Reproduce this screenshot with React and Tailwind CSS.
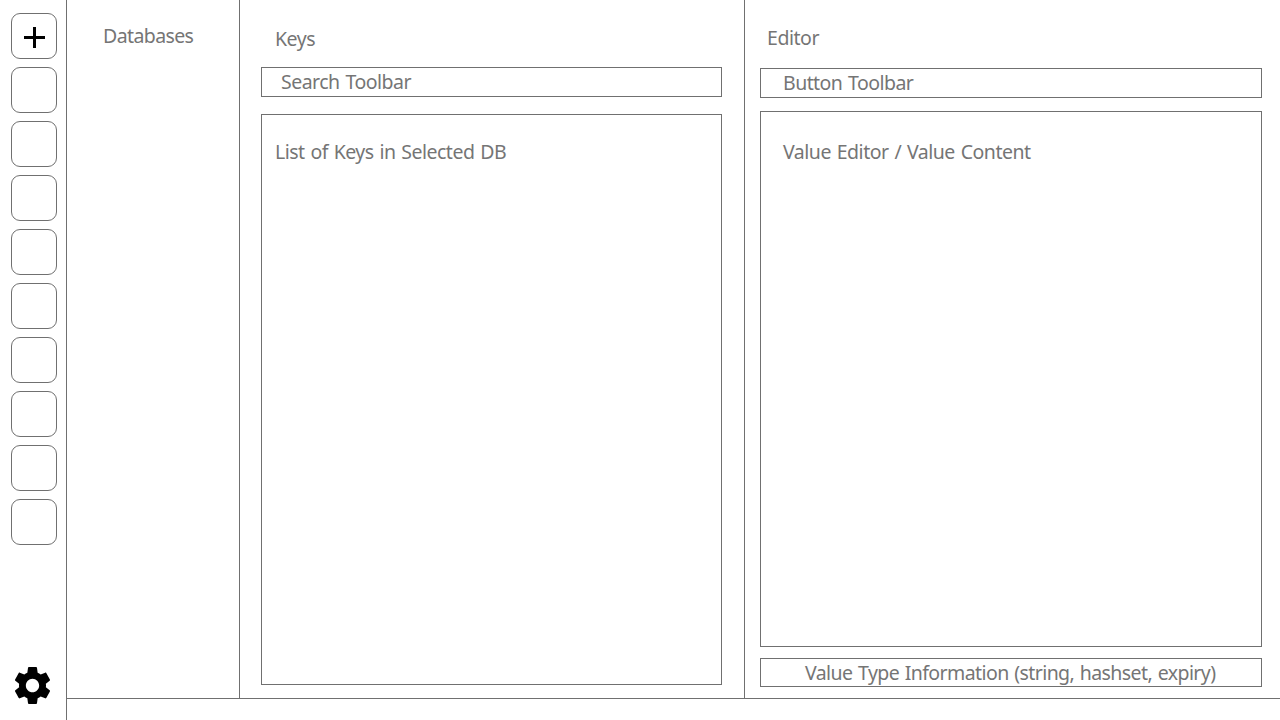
const SLOTS = 10;

function Label({ className, children }) {
  return (
    <div className={`h-[27px] w-max whitespace-nowrap text-[19.5px] leading-[27px] text-[#757575] [word-spacing:1.2px] ${className}`}>
      {children}
    </div>
  );
}

function PlusIcon() {
  return (
    <svg className="h-[21px] w-[21px]" viewBox="0 0 21 21" shapeRendering="crispEdges">
      <path d="M9 0h3v9h9v3h-9v9H9v-9H0V9h9z" fill="#000" />
    </svg>
  );
}

function GearIcon() {
  return (
    <svg className="h-[37px] w-[35px]" viewBox="2.27 2 19.46 20" preserveAspectRatio="none">
      <path
        fill="#000"
        d="M19.43 12.98c.04-.32.07-.64.07-.98s-.03-.66-.07-.98l2.11-1.65c.19-.15.24-.42.12-.64l-2-3.46c-.12-.22-.39-.3-.61-.22l-2.49 1c-.52-.4-1.08-.73-1.69-.98l-.38-2.65C14.46 2.18 14.25 2 14 2h-4c-.25 0-.46.18-.49.42l-.38 2.65c-.61.25-1.17.59-1.69.98l-2.49-1c-.23-.09-.49 0-.61.22l-2 3.46c-.13.22-.07.49.12.64l2.11 1.65c-.04.32-.07.65-.07.98s.03.66.07.98l-2.11 1.65c-.19.15-.24.42-.12.64l2 3.46c.12.22.39.3.61.22l2.49-1c.52.4 1.08.73 1.69.98l.38 2.65c.03.24.24.42.49.42h4c.25 0 .46-.18.49-.42l.38-2.65c.61-.25 1.17-.59 1.69-.98l2.49 1c.23.09.49 0 .61-.22l2-3.46c.12-.22.07-.49-.12-.64l-2.11-1.65zM12 15.7c-2 0-3.7-1.65-3.7-3.7s1.7-3.7 3.7-3.7 3.7 1.65 3.7 3.7-1.7 3.7-3.7 3.7z"
      />
    </svg>
  );
}

export default function App() {
  return (
    <div className="flex h-[720px] w-[1280px] overflow-hidden bg-white font-['Noto_Sans','Open_Sans',sans-serif]">
      <nav className="flex w-[67px] shrink-0 flex-col justify-between border-r border-[#707070] pt-[13px] pb-4 pl-[11px]">
        <div className="flex flex-col gap-2">
          {Array.from({ length: SLOTS }, (_, i) => (
            <div key={i} className="h-[46px] w-[46px] rounded-[9px] border border-[#707070] pt-[13px] pl-3">
              {i === 0 && <PlusIcon />}
            </div>
          ))}
        </div>
        <div className="pl-1">
          <GearIcon />
        </div>
      </nav>

      <div className="flex min-w-0 grow flex-col">
        <main className="flex h-[699px] border-b border-[#707070]">
          <section className="w-[173px] shrink-0 border-r border-[#707070] pt-[22px] pl-9">
            <Label className="tracking-[-0.6px]">Databases</Label>
          </section>

          <section className="flex w-[505px] shrink-0 flex-col border-r border-[#707070] pt-[25px] pr-[22px] pb-[13px] pl-[21px]">
            <Label className="ml-3.5 tracking-[-0.45px]">Keys</Label>
            <div className="mt-[15px] h-[30px] shrink-0 border border-[#707070] pl-[19px]">
              <Label className="tracking-[-0.51px]">Search Toolbar</Label>
            </div>
            <div className="mt-[17px] grow border border-[#707070] pt-[23px] pl-[13px]">
              <Label className="tracking-[-0.5px]">List of Keys in Selected DB</Label>
            </div>
          </section>

          <section className="flex grow flex-col pt-6 pr-[18px] pb-[11px] pl-[15px]">
            <Label className="ml-[7px] tracking-[-0.45px]">Editor</Label>
            <div className="mt-[17px] h-[30px] shrink-0 border border-[#707070] pl-[22px]">
              <Label className="tracking-[-0.55px]">Button Toolbar</Label>
            </div>
            <div className="mt-[13px] grow border border-[#707070] pt-[26px] pl-[22px]">
              <Label className="tracking-[-0.48px]">Value Editor / Value Content</Label>
            </div>
            <div className="mt-[11px] h-[29px] shrink-0 border border-[#707070] pl-11">
              <Label className="tracking-[-0.59px]">Value Type Information (string, hashset, expiry)</Label>
            </div>
          </section>
        </main>
      </div>
    </div>
  );
}
